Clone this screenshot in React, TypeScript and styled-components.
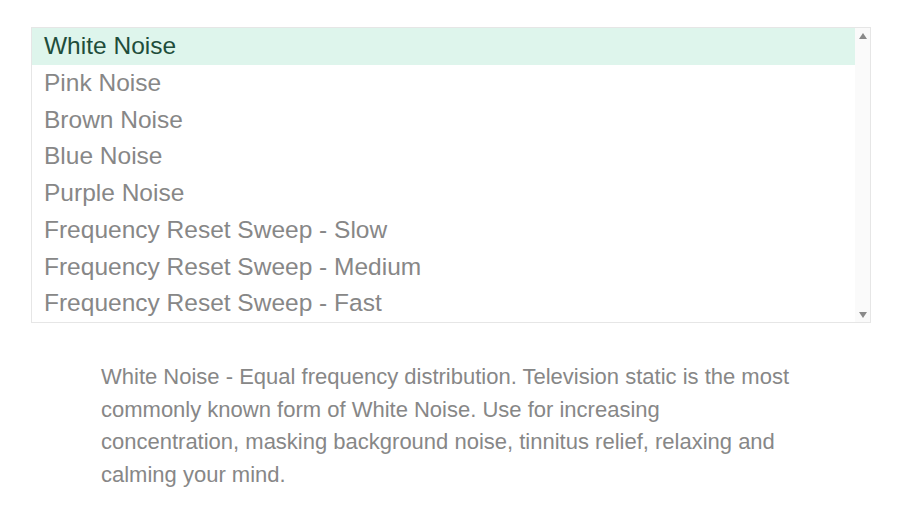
import styled, { createGlobalStyle } from 'styled-components';

const noises = [
  'White Noise',
  'Pink Noise',
  'Brown Noise',
  'Blue Noise',
  'Purple Noise',
  'Frequency Reset Sweep - Slow',
  'Frequency Reset Sweep - Medium',
  'Frequency Reset Sweep - Fast',
];

const GlobalStyle = createGlobalStyle`
  body {
    margin: 0;
    background: #ffffff;
    font-family: 'Liberation Sans', Arial, sans-serif;
  }
`;

export default function App() {
  const selected = 0;

  return (
    <>
      <GlobalStyle />
      <Page>
        <ListBox>
          <Options>
            {noises.map((name, index) => (
              <Option key={name} $active={index === selected}>
                {name}
              </Option>
            ))}
          </Options>
          <ScrollBar>
            <ArrowUp />
            <ArrowDown />
          </ScrollBar>
        </ListBox>
        <Description>
          White Noise - Equal frequency distribution. Television static is the most commonly known
          form of White Noise. Use for increasing concentration, masking background noise, tinnitus
          relief, relaxing and calming your mind.
        </Description>
      </Page>
    </>
  );
}

const Page = styled.main`
  display: flex;
  flex-direction: column;
  padding: 27px 0 0 31px;
  width: 840px;
`;

const ListBox = styled.div`
  display: flex;
  border: 1px solid #e6e6e6;
  background: #ffffff;
`;

const Options = styled.ul`
  flex: 1;
  margin: 0;
  padding: 0;
  list-style: none;
`;

const Option = styled.li<{ $active: boolean }>`
  padding-left: 12px;
  font-size: 24.5px;
  line-height: 1.5;
  color: ${({ $active }) => ($active ? '#1e4d3b' : '#878787')};
  background: ${({ $active }) => ($active ? '#def5ec' : 'transparent')};
  white-space: nowrap;
`;

const ScrollBar = styled.div`
  display: flex;
  flex-direction: column;
  justify-content: space-between;
  align-items: center;
  width: 15px;
  padding: 5px 0 4px;
  background: #fafafa;
`;

const ArrowUp = styled.span`
  width: 0;
  height: 0;
  border-left: 4.5px solid transparent;
  border-right: 4.5px solid transparent;
  border-bottom: 6px solid #8a8a8a;
`;

const ArrowDown = styled.span`
  width: 0;
  height: 0;
  border-left: 4.5px solid transparent;
  border-right: 4.5px solid transparent;
  border-top: 6px solid #8a8a8a;
`;

const Description = styled.p`
  margin: 38px 0 0 70px;
  width: 690px;
  font-size: 22px;
  line-height: 32.7px;
  color: #878787;
`;
